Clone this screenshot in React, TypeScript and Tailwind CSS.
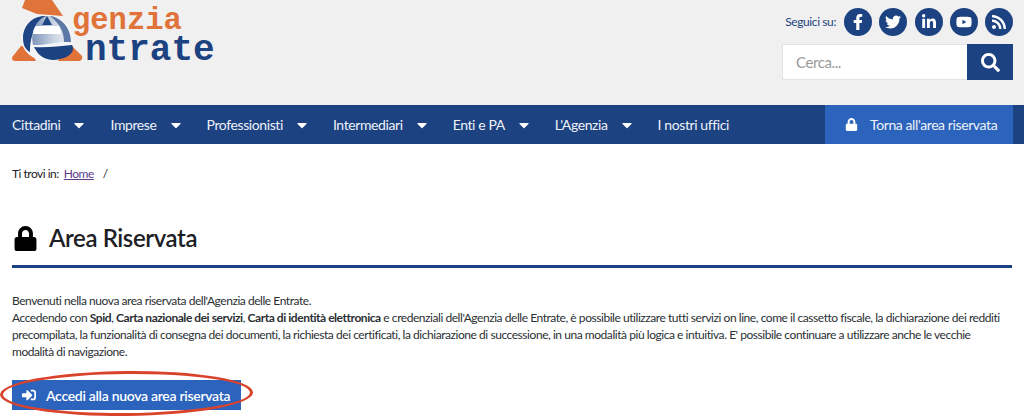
import { FaCaretDown, FaFacebookF, FaLinkedinIn, FaLock, FaRss, FaSearch, FaSignInAlt, FaTwitter, FaYoutube } from 'react-icons/fa';

const navItems = ['Cittadini', 'Imprese', 'Professionisti', 'Intermediari', 'Enti e PA', "L'Agenzia"];

const socials = [FaFacebookF, FaTwitter, FaLinkedinIn, FaYoutube, FaRss];

const Logo = () => (
  <div className="relative h-[105px] w-[230px] overflow-hidden">
    {/* svg sits at the page corner so its coordinates read as page pixels */}
    <svg className="absolute -left-3 top-0" width="100" height="70" viewBox="0 0 100 70">
      <defs>
        <linearGradient id="eFill" x1="0" y1="0" x2="1" y2="0">
          <stop offset="0" stopColor="#7f95ba" />
          <stop offset="0.6" stopColor="#cfd8e6" />
          <stop offset="1" stopColor="#eef1f6" />
        </linearGradient>
      </defs>
      <path d="M25 0 L52 0 L63 16 L37 14 L22 8 Z" fill="#e0733a" />
      <path d="M21 46 L28 46 L36 61 L15 61 C12 61 11 58 13 56 Z" fill="#e0733a" />
      <path d="M66 46 L72 46 L82 56 C83 59 81 61 78 61 L58 61 Z" fill="#e0733a" />
      <ellipse cx="47" cy="38" rx="26" ry="23" fill="#f4f5f7" />
      <path d="M47 16 C33 15 23 25 23 38 C23 46 26 50 30 52 C30 40 33 24 47 16 Z" fill="#1f4585" />
      <path d="M46 16 C58 15 70 25 71 41 L40 45 L33 45 C30 32 36 20 46 16 Z" fill="url(#eFill)" />
      <path d="M47 16 L52 25 L42 25 Z" fill="#1f4585" />
      <path d="M50 16 C60 17 71 27 71 42 L64 42 C64 32 60 24 50 16 Z" fill="#5d78a6" />
      <path d="M36 26 L59 26 C60 28 61 31 61 34 L33 34 C33 31 34 28 36 26 Z" fill="#ffffff" />
      <path d="M34 47 C46 48 60 46 72 45 C76 52 68 59 54 60 C44 60 38 55 34 47 Z" fill="#1c4281" />
    </svg>
    <span className="absolute left-[60px] top-[7px] font-['Liberation_Mono',monospace] text-[30.5px] font-bold leading-[28px] text-[#e0733a]">
      genzia
    </span>
    <span className="absolute left-[73px] top-[35px] font-['Liberation_Mono',monospace] text-[36px] font-bold leading-[32px] text-[#1c4281]">
      ntrate
    </span>
  </div>
);

export default function App() {
  return (
    <div className="relative h-[419px] w-[1024px] overflow-hidden bg-white font-['Lato',sans-serif] text-[#1c2024]">
      <header className="flex h-[105px] justify-between bg-[#f0f0f0] pl-3 pr-[11px]">
        <Logo />
        <div className="flex flex-col items-end pt-2">
          <div className="flex items-center">
            <span className="mr-2 text-[12px] tracking-[-0.4px] text-[#1c4281]">Seguici su:</span>
            <div className="flex gap-[7.25px]">
              {socials.map((Icon, i) => (
                <span key={i} className="flex h-[28px] w-[28px] items-center justify-center rounded-full bg-[#1c4281] text-[16px] text-white">
                  <Icon />
                </span>
              ))}
            </div>
          </div>
          <div className="mt-[8px] flex h-[36px] w-[231px] border border-[#e3e3e3] bg-white">
            <span className="flex-1 pl-[13px] text-[15px] leading-[34px] tracking-[-0.4px] text-[#9a9a9a]">Cerca...</span>
            <span className="-my-px -mr-px flex w-[46px] items-center justify-center bg-[#1c4281] text-[19px] text-white">
              <FaSearch />
            </span>
          </div>
        </div>
      </header>

      <nav className="flex h-[39px] items-center bg-[#1c4281] pl-3 pr-[11px] text-[14px] tracking-[-0.4px] text-[#eef2f8]">
        {navItems.map((item) => (
          <div key={item} className="mr-[23px] flex items-center">
            <span>{item}</span>
            <FaCaretDown className="ml-[11px] text-[16px] text-white" />
          </div>
        ))}
        <span>I nostri uffici</span>
        <div className="ml-auto flex h-full w-[188px] items-center bg-[#2b63bd] pl-[20px]">
          <FaLock className="text-[13px] text-white" />
          <span className="ml-[12px]">Torna all'area riservata</span>
        </div>
      </nav>

      <main className="px-3">
        <div className="flex items-center pt-[22px] text-[12px] leading-[16px] tracking-[-0.5px]">
          <span>Ti trovi in:</span>
          <span className="ml-[5px] text-[#5b3a8c] underline">Home</span>
          <span className="ml-[9px]">/</span>
        </div>

        <div className="mt-[41px] flex h-[45px] items-start border-b-[3px] border-[#1c4281] pl-[1px]">
          <FaLock className="mt-[3px] text-[25px] text-black" />
          <h1 className="ml-[11px] text-[24px] font-semibold leading-[30px] tracking-[-0.4px]">Area Riservata</h1>
        </div>

        <p className="mt-[24px] whitespace-nowrap text-[12px] leading-[17px] tracking-[-0.45px] text-[#2b2f33]">
          Benvenuti nella nuova area riservata dell'Agenzia delle Entrate.
          <br />
          Accedendo con <b>Spid</b>, <b>Carta nazionale dei servizi</b>, <b>Carta di identità elettronica</b> e credenziali dell'Agenzia delle Entrate, è possibile utilizzare tutti servizi on line, come il cassetto fiscale, la dichiarazione dei redditi
          <br />
          precompilata, la funzionalità di consegna dei documenti, la richiesta dei certificati, la dichiarazione di successione, in una modalità più logica e intuitiva. E' possibile continuare a utilizzare anche le vecchie
          <br />
          modalità di navigazione.
        </p>

        <div className="relative mt-[20px] w-[229px]">
          <div className="flex h-[30px] items-center bg-[#2b63bd] pl-[10px] text-[14px] font-semibold tracking-[-0.3px] text-white">
            <FaSignInAlt className="text-[14px]" />
            <span className="ml-[10px]">Accedi alla nuova area riservata</span>
          </div>
          <div className="absolute -left-[12px] -top-[9px] h-[45px] w-[253px] -rotate-[0.5deg] rounded-[50%] border-[3px] border-[#d9432c]" />
        </div>
      </main>
    </div>
  );
}
